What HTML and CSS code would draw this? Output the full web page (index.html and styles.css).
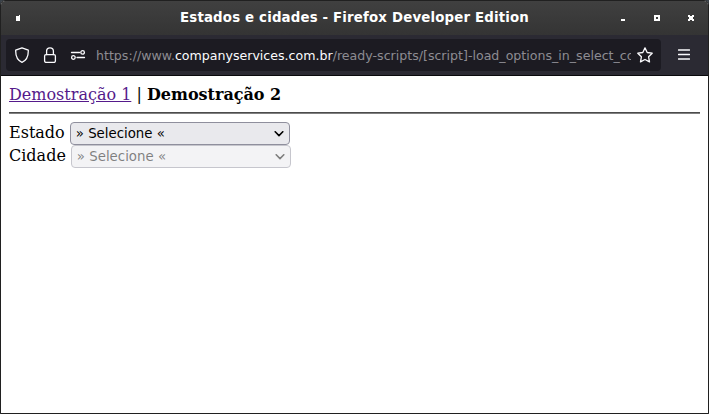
FILE: index.html
```html
<!DOCTYPE html>
<html lang="pt-BR">
<head>
<meta charset="utf-8">
<title>Estados e cidades</title>
<link rel="stylesheet" href="styles.css">
</head>
<body>
<div class="window">
  <header class="titlebar">
    <svg class="pin" width="4" height="7" viewBox="0 0 4 7"><path d="M0 1h3V0h1v6H0z" fill="#fff"/></svg>
    <h1 class="title">Estados e cidades - Firefox Developer Edition</h1>
    <div class="controls">
      <svg width="6" height="6" viewBox="0 0 6 6"><path d="M1 4h4v2H1z" fill="#fff"/></svg>
      <svg width="6" height="6" viewBox="0 0 6 6"><path d="M1 1h4v4H1z" fill="none" stroke="#fff" stroke-width="2"/></svg>
      <svg width="6" height="6" viewBox="0 0 6 6"><path d="M0 0h2v1h2V0h2v2H5v2h1v2H4V5H2v1H0V4h1V2H0z" fill="#fff"/></svg>
    </div>
  </header>
  <nav class="toolbar">
    <div class="urlbar">
      <svg class="icon shield" width="16" height="16" viewBox="0 0 16 16"><path d="M8 .8 14.300 3.200C14.500 9.400 12.300 13.500 8 15.300 3.700 13.500 1.500 9.400 1.700 3.200Z"/></svg>
      <svg class="icon lock" width="16" height="16" viewBox="0 0 16 16"><rect x="2.600" y="7.600" width="10.800" height="7.800" rx="1.400"/><path d="M4.600 7.500V4.200a3.400 3.400 0 0 1 6.800 0v3.300"/></svg>
      <svg class="icon perms" width="16" height="16" viewBox="0 0 16 16"><path d="M1.500 5.500h8M7 10.500h7.500"/><circle cx="12.600" cy="5.400" r="1.800"/><circle cx="3.400" cy="10.500" r="1.800"/></svg>
      <div class="url">https://www.<span class="domain">companyservices.com.br</span>/ready-scripts/[script]-load_options_in_select_co</div>
      <svg class="icon star" width="16" height="16" viewBox="0 0 16 16"><path d="m8 .9 2.200 4.600 5 .7-3.600 3.600.9 5.100L8 12.500l-4.500 2.400.9-5.100L.8 6.200l5-.7z"/></svg>
    </div>
    <svg class="icon menu" width="12" height="11" viewBox="0 0 12 11"><path d="M.5 1h11M.5 5.500h11M.5 10h11"/></svg>
  </nav>
  <main class="page">
    <div class="tabs"><a href="#">Demostração 1</a> | <b>Demostração 2</b></div>
    <hr>
    <div class="field"><span class="label">Estado</span><div class="select"><span>» Selecione «</span><svg class="chevron" width="10" height="6" viewBox="0 0 10 6"><path d="M1.200.8 5 4.600 8.800.8"/></svg></div></div>
    <div class="field"><span class="label">Cidade</span><div class="select disabled"><span>» Selecione «</span><svg class="chevron" width="10" height="6" viewBox="0 0 10 6"><path d="M1.200.8 5 4.600 8.800.8"/></svg></div></div>
  </main>
</div>
</body>
</html>
```
FILE: styles.css
```css
* { box-sizing: border-box; }
body { margin: 0; background: #3a4148; overflow: hidden; }
svg { display: block; flex: none; }
.window {
  display: flex;
  flex-direction: column;
  height: 414px;
  border: 1px solid #202020;
  border-radius: 5px 5px 0 0;
  background: #fff;
  overflow: hidden;
}
.titlebar {
  display: grid;
  grid-template-columns: 110px 1fr 110px;
  align-items: center;
  height: 34px;
  background: linear-gradient(#404040, #343434);
}
.pin { margin-left: 15px; }
.title {
  margin: 0;
  color: #fff;
  font: bold 13.333px/16px "DejaVu Sans", sans-serif;
  letter-spacing: .17px;
  text-align: center;
  white-space: nowrap;
}
.controls { display: flex; justify-content: flex-end; gap: 28px; padding-right: 14px; }
.toolbar {
  display: flex;
  align-items: center;
  height: 41px;
  padding: 0 18px 1px 5px;
  background: #2b2a33;
  border-bottom: 1px solid #09090c;
}
.urlbar {
  display: flex;
  align-items: center;
  width: 655px;
  height: 32px;
  padding: 0 8px;
  border-radius: 4px;
  background: #1c1b22;
}
.icon { fill: none; stroke: #fbfbfe; stroke-width: 1.3; stroke-linejoin: round; stroke-linecap: round; }
.lock, .perms { margin-left: 12px; }
.url {
  width: 535px;
  margin: 0 6px 0 10px;
  padding-top: 2px;
  overflow: hidden;
  color: #8d8c92;
  font: 12.6px/20px "DejaVu Sans", sans-serif;
  white-space: nowrap;
}
.domain { color: #fbfbfe; }
.menu { margin-left: auto; }
.page { padding: 9px 8px 8px; color: #000; font: 16px/19px "DejaVu Serif", serif; }
.tabs { height: 19px; }
.tabs a { color: #551a8b; }
hr { height: 2px; margin: 8px 0; border: 0; background: linear-gradient(#4c4c4c 50%, #808080 50%); }
.field { display: flex; align-items: center; gap: 5px; height: 23px; }
.label { padding-bottom: 2px; }
.select {
  display: flex;
  align-items: center;
  justify-content: space-between;
  width: 220px;
  height: 23px;
  padding: 0 5px;
  border: 1px solid #8f8f9d;
  border-radius: 4px;
  background: #e9e9ed;
  font: 13.333px/16px "DejaVu Sans", sans-serif;
}
.disabled { opacity: .5; }
.chevron { fill: none; stroke: #000; stroke-width: 1.6; stroke-linecap: round; stroke-linejoin: round; }
```
